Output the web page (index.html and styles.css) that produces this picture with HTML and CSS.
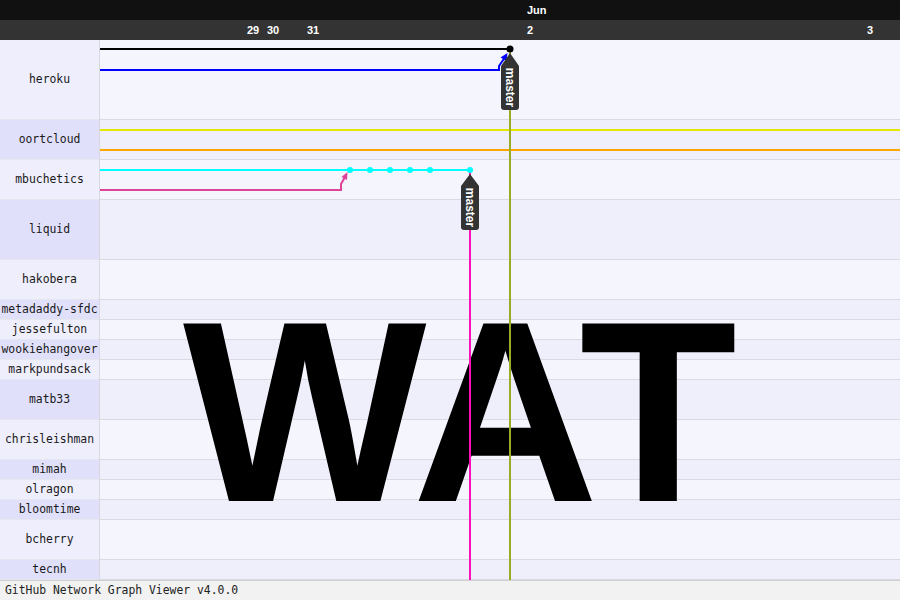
FILE: index.html
```html
<!DOCTYPE html>
<html>
<head>
<meta charset="utf-8">
<title>GitHub Network Graph Viewer</title>
<link rel="stylesheet" href="styles.css">
</head>
<body>
<div class="app">
  <header class="axis">
    <div class="months">
      <span class="tick" style="left:527px">Jun</span>
    </div>
    <div class="days">
      <span class="tick" style="left:247px">29</span>
      <span class="tick" style="left:267px">30</span>
      <span class="tick" style="left:307px">31</span>
      <span class="tick" style="left:527px">2</span>
      <span class="tick" style="left:867px">3</span>
    </div>
  </header>
  <main class="network">
    <div class="names">
      <div class="name r80">heroku</div>
      <div class="name r40 alt">oortcloud</div>
      <div class="name r40">mbuchetics</div>
      <div class="name r60 alt">liquid</div>
      <div class="name r40">hakobera</div>
      <div class="name r20 alt">metadaddy-sfdc</div>
      <div class="name r20">jessefulton</div>
      <div class="name r20 alt">wookiehangover</div>
      <div class="name r20">markpundsack</div>
      <div class="name r40 alt">matb33</div>
      <div class="name r40">chrisleishman</div>
      <div class="name r20 alt">mimah</div>
      <div class="name r20">olragon</div>
      <div class="name r20 alt">bloomtime</div>
      <div class="name r40">bcherry</div>
      <div class="name r20 alt">tecnh</div>
    </div>
    <div class="graph">
      <div class="lane r80"></div>
      <div class="lane r40 alt"></div>
      <div class="lane r40"></div>
      <div class="lane r60 alt"></div>
      <div class="lane r40"></div>
      <div class="lane r20 alt"></div>
      <div class="lane r20"></div>
      <div class="lane r20 alt"></div>
      <div class="lane r20"></div>
      <div class="lane r40 alt"></div>
      <div class="lane r40"></div>
      <div class="lane r20 alt"></div>
      <div class="lane r20"></div>
      <div class="lane r20 alt"></div>
      <div class="lane r40"></div>
      <div class="lane r20 alt"></div>
      <div class="wat">WAT</div>
      <svg class="edges" width="800" height="540" viewBox="100 40 800 540">
        <line x1="100" y1="130" x2="900" y2="130" stroke="#e4e800" stroke-width="2"/>
        <line x1="100" y1="150" x2="900" y2="150" stroke="#ffa500" stroke-width="2"/>
        <line x1="510" y1="49" x2="510" y2="580" stroke="#9aab26" stroke-width="2"/>
        <line x1="470" y1="170" x2="470" y2="580" stroke="#ff10b8" stroke-width="2"/>
        <line x1="100" y1="49" x2="510" y2="49" stroke="#000" stroke-width="2"/>
        <path d="M100 70 H499 V66 L504.5 58" fill="none" stroke="#0000ff" stroke-width="2"/>
        <path d="M507.5 53 L506.5 61 L500.5 57.5 Z" fill="#0000ff"/>
        <circle cx="510" cy="49" r="3.5" fill="#000"/>
        <line x1="100" y1="170" x2="470" y2="170" stroke="#00ffff" stroke-width="2"/>
        <path d="M100 190 H341 V184 L345 177" fill="none" stroke="#dd4499" stroke-width="2"/>
        <path d="M347.5 172 L347 180 L341.5 177 Z" fill="#dd4499"/>
        <circle cx="350" cy="170" r="3" fill="#00ffff"/>
        <circle cx="370" cy="170" r="3" fill="#00ffff"/>
        <circle cx="390" cy="170" r="3" fill="#00ffff"/>
        <circle cx="410" cy="170" r="3" fill="#00ffff"/>
        <circle cx="430" cy="170" r="3" fill="#00ffff"/>
        <circle cx="470" cy="170" r="3" fill="#00ffff"/>
        <path d="M510 53 L519 66 V107 Q519 110 516 110 H504 Q501 110 501 107 V66 Z" fill="#333"/>
        <text class="ref" transform="translate(510 87.5) rotate(90)">master</text>
        <path d="M470 174 L479 186 V227 Q479 230 476 230 H464 Q461 230 461 227 V186 Z" fill="#333"/>
        <text class="ref" transform="translate(470 207.5) rotate(90)">master</text>
      </svg>
    </div>
  </main>
  <footer class="footer">GitHub Network Graph Viewer v4.0.0</footer>
</div>
</body>
</html>
```
FILE: styles.css
```css
* { box-sizing: border-box; }
html, body { margin: 0; padding: 0; }
body {
  width: 900px;
  height: 600px;
  overflow: hidden;
  background: #f4f4fe;
  font-family: "DejaVu Sans Mono", monospace;
}
.app {
  display: flex;
  flex-direction: column;
  width: 900px;
  height: 600px;
}
.axis { flex: 0 0 40px; }
.months, .days {
  position: relative;
  height: 20px;
  color: #fff;
  font-family: "Liberation Sans", Arial, sans-serif;
  font-weight: bold;
  font-size: 11px;
}
.months { background: #111; }
.days { background: #333; }
.tick {
  position: absolute;
  top: 0;
  line-height: 20px;
}
.network {
  flex: 0 0 540px;
  display: flex;
  overflow: hidden;
}
.names {
  width: 100px;
  flex: 0 0 100px;
  display: flex;
  flex-direction: column;
  border-right: 1px solid #d8d8e0;
}
.name {
  display: flex;
  align-items: center;
  justify-content: center;
  font-size: 11.4px;
  color: #1a1a1a;
  background: #efeefd;
  border-bottom: 1px solid #e6e6ee;
  white-space: nowrap;
  padding-bottom: 1px;
}
.name.alt { background: #e1e0fb; }
.r80 { height: 80px; flex: 0 0 80px; }
.r60 { height: 60px; flex: 0 0 60px; }
.r40 { height: 40px; flex: 0 0 40px; }
.r20 { height: 20px; flex: 0 0 20px; }
.graph {
  position: relative;
  flex: 1;
  display: flex;
  flex-direction: column;
}
.lane {
  background: #f5f5fe;
  border-bottom: 1px solid #dadae2;
}
.lane.alt { background: #efeffc; }
.wat {
  position: absolute;
  left: 83px;
  top: 243px;
  font-family: "Liberation Sans", Arial, sans-serif;
  font-weight: bold;
  font-size: 258px;
  line-height: 1;
  color: #000;
  white-space: nowrap;
}
.edges {
  position: absolute;
  left: 0;
  top: 0;
}
.ref {
  fill: #fff;
  font-family: "Liberation Sans", Arial, sans-serif;
  font-weight: bold;
  font-size: 12px;
  text-anchor: middle;
  dominant-baseline: central;
}
.footer {
  flex: 0 0 20px;
  background: #f2f2f2;
  border-top: 1px solid #cfcfcf;
  color: #222;
  font-size: 11.4px;
  line-height: 19px;
  padding-left: 5px;
}
```
